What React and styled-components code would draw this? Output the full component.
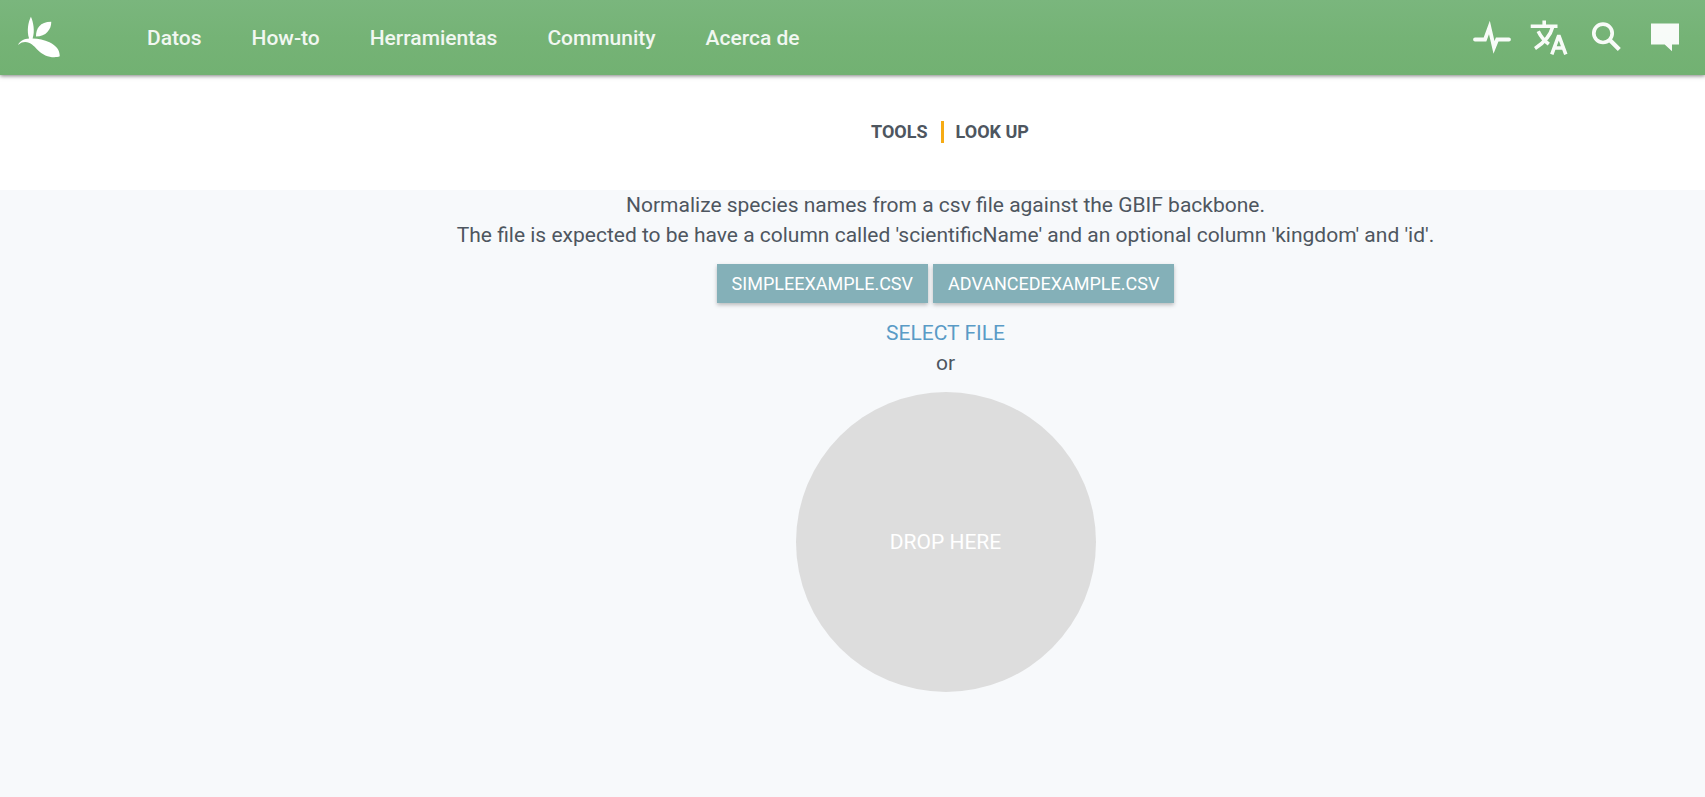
import React, { useRef } from "react";
import styled, { createGlobalStyle } from "styled-components";

const GlobalStyle = createGlobalStyle`
  *, *::before, *::after { box-sizing: border-box; }
  body {
    margin: 0;
    background: #f7f9fb;
    color: #4e565f;
    font-family: Roboto, "Liberation Sans", sans-serif;
    font-size: 21px;
    line-height: 30px;
  }
`;

const TopBar = styled.header`
  position: relative;
  display: flex;
  align-items: center;
  justify-content: space-between;
  height: 75px;
  padding: 0 20px 0 15px;
  background: linear-gradient(#7ab67d, #75b376 50%, #72b172);
  box-shadow: 0 1px 4px rgba(0, 0, 0, 0.5);
`;

const NavGroup = styled.nav`
  display: flex;
  align-items: center;
`;

const HomeLink = styled.a`
  display: flex;
  margin-right: 59px;
  padding-bottom: 2px;
  color: #fff;
`;

const NavLink = styled.a`
  padding: 0 25px;
  color: #fff;
  font-weight: 500;
  opacity: 0.9;
  text-decoration: none;
`;

const Actions = styled.div`
  display: flex;
  gap: 18px;
  padding-bottom: 2px;
`;

const IconButton = styled.button`
  display: flex;
  padding: 0;
  border: 0;
  background: none;
  color: #fff;
  opacity: 0.95;
  cursor: pointer;
`;

const Centered = styled.div`
  display: flex;
  flex-direction: column;
  align-items: center;
  padding: 0 14px 0 200px;
  text-align: center;
`;

const TitleBand = styled(Centered)`
  padding-top: 46px;
  padding-bottom: 47px;
  background: #fff;
`;

const Crumbs = styled.ol`
  display: flex;
  margin: 0;
  padding: 0 0 0 9px;
  list-style: none;
  font-size: 18px;
  font-weight: 700;
  line-height: 22px;
`;

const Crumb = styled.li`
  & + & {
    margin-left: 13px;
    padding-left: 12px;
    border-left: 3px solid #f6ab14;
  }
`;

const CrumbLink = styled.a`
  color: inherit;
  text-decoration: none;
`;

const Intro = styled.p`
  margin: 0;
`;

const Examples = styled.div`
  display: flex;
  gap: 5px;
  margin: 14px 0 15px;
`;

const ExampleLink = styled.a`
  padding: 5px 15px 4px;
  background: #84b0b8;
  box-shadow: 0 2px 4px rgba(0, 0, 0, 0.25);
  color: #fff;
  font-size: 18px;
  text-decoration: none;
`;

const SelectFile = styled.button`
  padding: 0;
  border: 0;
  background: none;
  color: #5a9bc6;
  font: inherit;
  cursor: pointer;
`;

const DropZone = styled.div`
  display: flex;
  align-items: center;
  justify-content: center;
  width: 300px;
  height: 300px;
  margin: 14px 0;
  border-radius: 50%;
  background: #ddd;
  color: #fff;
`;

const links = ["Datos", "How-to", "Herramientas", "Community", "Acerca de"];

function Logo() {
  return (
    <svg width="48" height="46" viewBox="90 239 540 524" fill="currentColor" aria-hidden="true">
      <path d="M325.5,495.4c0-89.7,43.8-167.4,174.2-167.4C499.6,417.9,440.5,495.4,325.5,495.4" />
      <path d="M534.3,731c24.4,0,43.2-3.5,62.4-10.5c0-71-42.4-121.8-117.2-158.4c-57.2-28.7-127.7-43.6-192.1-43.6c28.2-84.6,7.6-189.7-19.7-247.4c-30.3,60.4-49.2,164-20.1,248.3c-57.1,4.2-102.4,29.1-121.6,61.9c-1.4,2.5-4.4,7.8-2.6,8.8c1.4,0.7,3.6-1.5,4.9-2.7c20.6-19.1,47.9-28.4,74.2-28.4c60.7,0,103.4,50.3,133.7,80.5C401.3,704.3,464.8,731.2,534.3,731" />
    </svg>
  );
}

function PulseIcon() {
  return (
    <svg width="40" height="40" viewBox="0 0 40 40" fill="none" stroke="currentColor" strokeWidth="3.8" strokeLinecap="round" aria-hidden="true">
      <path d="M4 22.5H14L18.4 10.5L23 30.5L26.2 22.5H38" strokeMiterlimit="10" />
    </svg>
  );
}

function TranslateIcon() {
  return (
    <svg width="40" height="40" viewBox="0 0 40 40" fill="none" stroke="currentColor" strokeWidth="3.6" aria-hidden="true">
      <path d="M1.7 9.3H28.5M15.2 3.5V10" />
      <path d="M23.6 10C21.5 18.5 16 25 6 31.5" />
      <path d="M9.2 14.2C12 20 15.5 23.8 19.8 27.2" />
      <path d="M22.8 37.3L29.8 18.4L36.8 37.3M25.5 31H34" strokeLinejoin="bevel" />
    </svg>
  );
}

function SearchIcon() {
  return (
    <svg width="40" height="40" viewBox="0 0 40 40" fill="none" stroke="currentColor" strokeWidth="3.7" aria-hidden="true">
      <circle cx="16" cy="16.3" r="9.2" />
      <path d="M22 22.3L32.3 32.6" strokeWidth="4.3" />
    </svg>
  );
}

function MessageIcon() {
  return (
    <svg width="40" height="40" viewBox="0 0 40 40" fill="currentColor" aria-hidden="true">
      <path d="M6 6.5H34V27.5H27V34.2L19.7 27.5H6Z" />
    </svg>
  );
}

export default function App() {
  const picker = useRef(null);
  return (
    <>
      <GlobalStyle />
      <TopBar>
        <NavGroup>
          <HomeLink href="#" aria-label="GBIF"><Logo /></HomeLink>
          {links.map((label) => (
            <NavLink key={label} href="#">{label}</NavLink>
          ))}
        </NavGroup>
        <Actions>
          <IconButton aria-label="Health"><PulseIcon /></IconButton>
          <IconButton aria-label="Language"><TranslateIcon /></IconButton>
          <IconButton aria-label="Search"><SearchIcon /></IconButton>
          <IconButton aria-label="Feedback"><MessageIcon /></IconButton>
        </Actions>
      </TopBar>
      <TitleBand>
        <Crumbs>
          <Crumb><CrumbLink href="#">TOOLS</CrumbLink></Crumb>
          <Crumb>LOOK UP</Crumb>
        </Crumbs>
      </TitleBand>
      <Centered as="main">
        <Intro>
          Normalize species names from a csv file against the GBIF backbone.
          <br />
          The file is expected to be have a column called 'scientificName' and an optional column 'kingdom' and 'id'.
        </Intro>
        <Examples>
          <ExampleLink href="#">SIMPLEEXAMPLE.CSV</ExampleLink>
          <ExampleLink href="#">ADVANCEDEXAMPLE.CSV</ExampleLink>
        </Examples>
        <SelectFile type="button" onClick={() => picker.current.click()}>SELECT FILE</SelectFile>
        <input ref={picker} type="file" accept=".csv" aria-label="CSV" hidden />
        <span>or</span>
        <DropZone>DROP HERE</DropZone>
      </Centered>
    </>
  );
}
